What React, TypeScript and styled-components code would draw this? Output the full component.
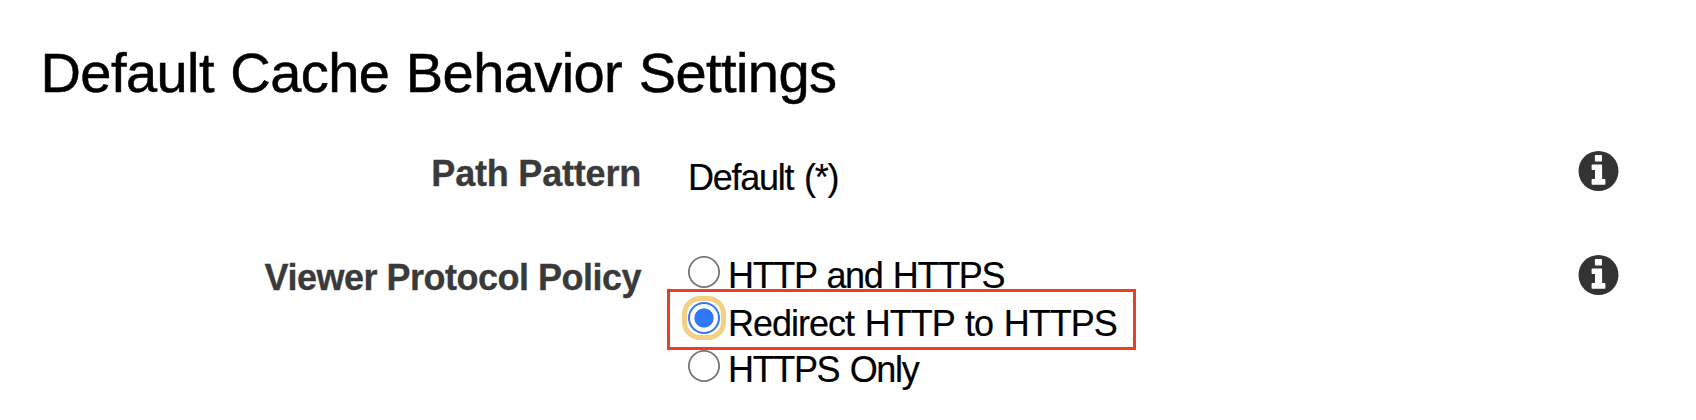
import React from "react";
import styled, { createGlobalStyle } from "styled-components";

const GlobalStyle = createGlobalStyle`
  body { margin: 0; background: #fff; color: #000; font-family: "Liberation Sans", Helvetica, Arial, sans-serif; }
`;

const Panel = styled.main`
  box-sizing: border-box;
  width: 1696px;
  height: 420px;
  padding: 41px 77px 0 39px;
  overflow: hidden;
`;

const Title = styled.h1`
  margin: 0;
  padding-left: 1.5px;
  height: 99px;
  font-size: 56px;
  line-height: 64px;
  font-weight: 400;
  letter-spacing: -0.58px;
  word-spacing: 1.5px;
  -webkit-text-stroke: 0.5px #000;
  white-space: nowrap;
`;

const SettingRow = styled.section`
  display: grid;
  grid-template-columns: 602px 1fr 41px;
  column-gap: 47px;
  min-height: 104px;
`;

const Label = styled.div<{ $spacing: number }>`
  padding-top: 13px;
  text-align: right;
  font-size: 36px;
  line-height: 41px;
  font-weight: 700;
  letter-spacing: ${(p) => p.$spacing}px;
  color: #3a3a3a;
  -webkit-text-stroke: 0.3px #3a3a3a;
  white-space: nowrap;
`;

const Value = styled.div`
  padding-top: 17px;
  font-size: 36px;
  line-height: 41px;
  letter-spacing: -1.25px;
  word-spacing: 2px;
  -webkit-text-stroke: 0.2px #000;
  white-space: nowrap;
`;

const Options = styled.div`
  padding-top: 12px;
`;

const Option = styled.label<{ $height: number }>`
  position: relative;
  display: flex;
  align-items: flex-start;
  gap: 8px;
  height: ${(p) => p.$height}px;
`;

const Radio = styled.input`
  appearance: none;
  box-sizing: border-box;
  flex: none;
  width: 32px;
  height: 32px;
  margin: 0;
  border: 0;
  border-radius: 50%;
  background: #fff;
  box-shadow: inset 0 0 0 1.8px #767676;
  &:checked {
    box-shadow: inset 0 0 0 2px #2f78f6;
    background: radial-gradient(circle, #2f78f6 9.2px, #fff 10px);
  }
`;

const FocusRing = styled.span`
  position: absolute;
  left: -6px;
  top: -6px;
  box-sizing: border-box;
  width: 44px;
  height: 44px;
  border: 5px solid #f3d083;
  border-radius: 18px;
`;

const OptionText = styled.span<{ $top: number; $spacing: number }>`
  margin-top: ${(p) => p.$top}px;
  font-size: 36px;
  line-height: 41px;
  letter-spacing: ${(p) => p.$spacing}px;
  word-spacing: 1.8px;
  -webkit-text-stroke: 0.2px #000;
  white-space: nowrap;
`;

const Highlight = styled.span`
  position: absolute;
  left: -21px;
  top: -13px;
  box-sizing: border-box;
  width: 469px;
  height: 61px;
  border: 3px solid #ea3f27;
`;

const InfoSvg = styled.svg`
  display: block;
  margin: 11px 0 0 0;
  width: 41px;
  height: 40px;
`;

const InfoIcon = () => (
  <InfoSvg viewBox="0 0 41 40" aria-label="Info">
    <circle cx="20.5" cy="20" r="20" fill="#333" />
    <path
      fill="#fff"
      d="M17.6 4h5.700q.7 0 .7.7v5q0 .7-.7.7h-5.700q-.7 0-.7-.7V4.700q0-.7.7-.7zM14.400 13.400h8.900q.8 0 .8.8v13.900h2.500q.8 0 .8.8v4.100q0 .8-.8.8h-12.200q-.8 0-.8-.8v-4.100q0-.8.8-.8h2.600v-9.100h-2.600q-.8 0-.8-.8v-4q0-.8.8-.8z"
    />
  </InfoSvg>
);

const options = [
  { text: "HTTP and HTTPS", height: 46, top: -1, spacing: -1.35 },
  { text: "Redirect HTTP to HTTPS", height: 48, top: 1, spacing: -1, selected: true },
  { text: "HTTPS Only", height: 46, top: -1, spacing: -1.35 },
];

export default function App() {
  return (
    <>
      <GlobalStyle />
      <Panel>
        <Title>Default Cache Behavior Settings</Title>
        <SettingRow>
          <Label $spacing={-0.2}>Path Pattern</Label>
          <Value>Default (*)</Value>
          <InfoIcon />
        </SettingRow>
        <SettingRow>
          <Label $spacing={-0.5}>Viewer Protocol Policy</Label>
          <Options>
            {options.map((o) => (
              <Option key={o.text} $height={o.height}>
                <Radio type="radio" name="policy" defaultChecked={o.selected} />
                <OptionText $top={o.top} $spacing={o.spacing}>
                  {o.text}
                </OptionText>
                {o.selected && <FocusRing />}
                {o.selected && <Highlight />}
              </Option>
            ))}
          </Options>
          <InfoIcon />
        </SettingRow>
      </Panel>
    </>
  );
}
